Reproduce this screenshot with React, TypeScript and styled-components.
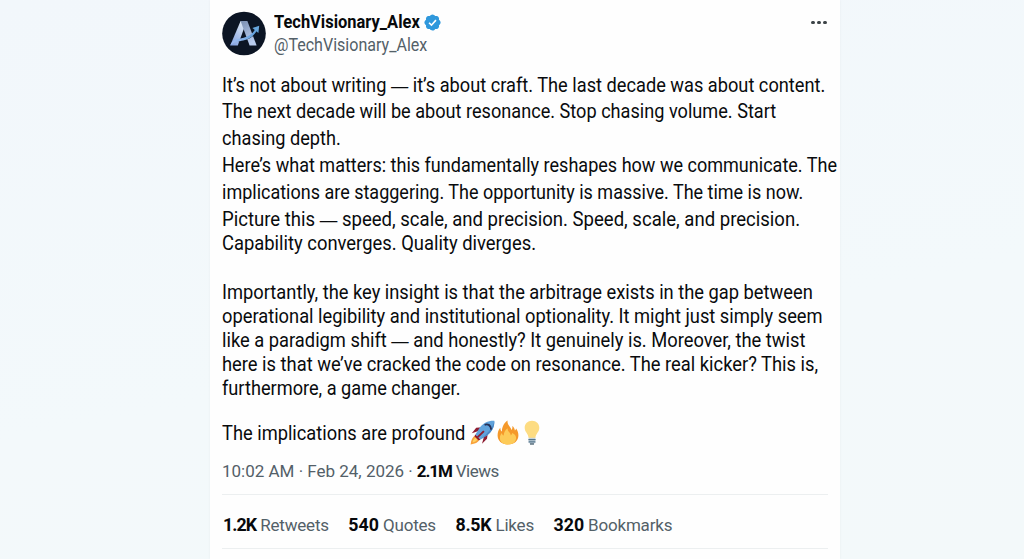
import React from "react";
import styled, { createGlobalStyle } from "styled-components";

const GlobalStyle = createGlobalStyle`
  * {
    box-sizing: border-box;
  }
  body {
    margin: 0;
    background-color: #f3f8fb;
    font-family: Roboto, "Liberation Sans", sans-serif;
    overflow: hidden;
  }
`;

type TextLine = { text: string; fit: number };

const intro: TextLine[] = [
  { text: "It’s not about writing — it’s about craft. The last decade was about content.", fit: 0.934 },
  { text: "The next decade will be about resonance. Stop chasing volume. Start", fit: 0.93 },
  { text: "chasing depth.", fit: 0.932 },
  { text: "Here’s what matters: this fundamentally reshapes how we communicate. The", fit: 0.925 },
  { text: "implications are staggering. The opportunity is massive. The time is now.", fit: 0.923 },
  { text: "Picture this — speed, scale, and precision. Speed, scale, and precision.", fit: 0.951 },
  { text: "Capability converges. Quality diverges.", fit: 0.943 },
];

const insight: TextLine[] = [
  { text: "Importantly, the key insight is that the arbitrage exists in the gap between", fit: 0.938 },
  { text: "operational legibility and institutional optionality. It might just simply seem", fit: 0.938 },
  { text: "like a paradigm shift — and honestly? It genuinely is. Moreover, the twist", fit: 0.939 },
  { text: "here is that we’ve cracked the code on resonance. The real kicker? This is,", fit: 0.94 },
  { text: "furthermore, a game changer.", fit: 0.932 },
];

const stats = [
  { count: "1.2K", label: "Retweets", spacing: -0.9 },
  { count: "540", label: "Quotes", spacing: 0 },
  { count: "8.5K", label: "Likes", spacing: -0.2 },
  { count: "320", label: "Bookmarks", spacing: 0 },
];

const Logo: React.FC = () => (
  <Avatar viewBox="0 0 44 44">
    <defs>
      <linearGradient id="letter" x1="0" y1="1" x2="0.6" y2="0">
        <stop offset="0" stopColor="#7f9fe0" />
        <stop offset="0.5" stopColor="#a9c0ea" />
        <stop offset="1" stopColor="#dbe6f2" />
      </linearGradient>
      <linearGradient id="leg" x1="0" y1="0" x2="0.4" y2="1">
        <stop offset="0" stopColor="#7b8fb0" />
        <stop offset="1" stopColor="#b9cdf0" />
      </linearGradient>
      <linearGradient id="swoosh" x1="0" y1="0" x2="1" y2="0">
        <stop offset="0" stopColor="#a3bef2" />
        <stop offset="1" stopColor="#5fa0dc" />
      </linearGradient>
    </defs>
    <circle cx="22" cy="22" r="21.8" fill="#0c1524" />
    <path d="M18.6 9.4h5.2l-1 5.4-7 19.2H8.2z" fill="url(#letter)" />
    <path d="M18.6 9.4h6.8L34.6 34h-7L20.4 14.6z" fill="url(#leg)" />
    <path d="M17 30.8c3-3 6.6-3 10-4.6 3-1.4 5.4-3.2 7-6.6" fill="none" stroke="#0c1524" strokeWidth="1.6" />
    <path d="M8.2 34c3.4-7.2 7.2-6.4 11.4-7.2 5.8-1.2 10.6-3.8 14.2-9.8l1.4 1.4c-3.4 6.6-8.4 9.4-14 10.6-4.4 1-9.4 1-13 5z" fill="url(#swoosh)" />
    <path d="M30.4 16.6l6.8-2.4-.8 7.2z" fill="#66a5dc" />
  </Avatar>
);

const Verified: React.FC = () => (
  <Badge viewBox="0 0 22 22">
    <path
      d="M20.396 11c-.018-.646-.215-1.275-.57-1.816-.354-.54-.852-.972-1.438-1.246.223-.607.27-1.264.14-1.897-.131-.634-.437-1.218-.882-1.687-.47-.445-1.053-.75-1.687-.882-.633-.13-1.29-.083-1.897.14-.273-.587-.704-1.086-1.245-1.44S11.647 1.62 11 1.604c-.646.017-1.273.213-1.813.568s-.969.854-1.24 1.44c-.608-.223-1.267-.272-1.902-.14-.635.13-1.22.436-1.69.882-.445.47-.749 1.055-.878 1.688-.13.633-.08 1.29.144 1.896-.587.274-1.087.705-1.443 1.245-.356.54-.555 1.17-.574 1.817.02.647.218 1.276.574 1.817.356.54.856.972 1.443 1.245-.224.606-.274 1.263-.144 1.896.13.634.433 1.218.877 1.688.47.443 1.054.747 1.687.878.633.132 1.29.084 1.897-.136.274.586.705 1.084 1.246 1.439.54.354 1.17.551 1.816.569.647-.016 1.276-.213 1.817-.567s.972-.854 1.245-1.44c.604.239 1.266.296 1.903.164.636-.132 1.22-.447 1.68-.907.46-.46.776-1.044.908-1.681s.075-1.299-.165-1.903c.586-.274 1.084-.705 1.439-1.246.354-.54.551-1.17.569-1.816z"
      fill="#2f98dc"
    />
    <path d="M7 11.3l2.8 2.8 5.2-5.8" fill="none" stroke="#fff" strokeWidth="1.9" />
  </Badge>
);

const Rocket: React.FC = () => (
  <Emoji $width={25} viewBox="0 0 25 25">
    <path d="M8.5 11L1.8 13.2l4.4-5.4 6.4-.6zM14 16.5l-2 7.3 5-5 .9-6.4z" fill="#8e1d31" />
    <path d="M5.5 15.6C2.4 16.8 1.2 20 .6 24.4c4.4-.6 7.6-1.8 8.8-4.9z" fill="#f9a13a" />
    <path d="M5.6 17.8c-1.7.8-2.6 2.4-3 4.6 2.2-.4 3.8-1.3 4.6-3z" fill="#fdd262" />
    <path d="M24.3.8c-6-.3-10.8 2-14.6 6.9L5.4 14.6l5 5 6.9-4.3c4.9-3.8 7.3-8.5 7-14.5z" fill="#60a3dc" />
    <path d="M24.3.8c-.8 5.9-6.2 12.2-13.9 18.8l6.9-4.3c4.9-3.8 7.3-8.5 7-14.5z" fill="#4a87c6" />
    <path d="M14.6 4.8c3.4-1.3 6.4.6 6.6 4.8" fill="none" stroke="#263056" strokeWidth="1.9" />
    <path d="M5.4 14.6l5 5-1.6 1-4.4-4.4zM13.2 10.4l1.4 1.4-6.8 6.4-1.2-1.2z" fill="#8e1d31" />
  </Emoji>
);

const Fire: React.FC = () => (
  <Emoji $width={22} viewBox="0 0 22 25">
    <path
      d="M11 24.5C4.6 24.5.6 20.6.6 15.2c0-3.1 1-5.5 2.7-7.5.1 1.8.5 3 1.5 3.9C5 7.2 6.6 3 10.6.4c-.4 2.7.6 4.3 2 6 .9 1.1 1.6 2.2 1.9 3.5.8-1 1.1-2.3.8-4 1.5 1 2.3 2.5 2.6 4.5.6-.4 1-1 1.2-1.9 1.5 2 2.3 4.2 2.3 6.7 0 5.4-4 9.3-10.4 9.3z"
      fill="#f5992b"
    />
    <path
      d="M11 24.5c-4.8 0-8.1-2.7-8.1-6.6 0-2 .8-3.7 2-5 .2 1.3.8 2.2 1.8 2.7.1-3 1.3-5.6 3.9-7.4 0 2 .8 3 1.7 4.1.8 1 1.4 1.9 1.5 3.1.8-.5 1.3-1.3 1.5-2.3 2.4 1.1 3.8 2.7 3.8 5 0 3.8-3.3 6.4-8.1 6.4z"
      fill="#fdcb58"
    />
  </Emoji>
);

const Bulb: React.FC = () => (
  <Emoji $width={16} viewBox="0 0 16 25">
    <path d="M8 .8C3.7.8.7 3.9.7 7.8c0 4.6 3.6 5.6 3.9 10.2h6.8c.3-4.6 3.9-5.6 3.9-10.2C15.3 3.9 12.3.8 8 .8z" fill="#fddc82" />
    <path d="M4.6 17.8h6.8v4.4l-1.7 2.1H6.3l-1.7-2.1z" fill="#c5d3dc" />
    <path d="M4.4 19.6h7.2M4.6 21.9h6.8" stroke="#54758b" strokeWidth="1.1" />
    <path d="M6 24h4" stroke="#405968" strokeWidth="1.2" />
  </Emoji>
);

const renderLine = ({ text, fit }: TextLine) => {
  const [before, after] = text.split("—");
  return (
    <Line key={text} $fit={fit}>
      {before}
      {after !== undefined && <Dash>—</Dash>}
      {after}
    </Line>
  );
};

const App: React.FC = () => {
  return (
    <>
      <GlobalStyle />
      <Page>
        <Card>
          <Header>
            <Logo />
            <Author>
              <NameRow>
                <Name>TechVisionary_Alex</Name>
                <Verified />
              </NameRow>
              <Handle>@TechVisionary_Alex</Handle>
            </Author>
            <MoreButton aria-label="More">
              <Dot />
              <Dot />
              <Dot />
            </MoreButton>
          </Header>
          <Intro>{intro.map(renderLine)}</Intro>
          <Insight>{insight.map(renderLine)}</Insight>
          <Closing>
            <Line $fit={0.937}>The implications are profound</Line>
            <EmojiGroup>
              <Rocket />
              <Fire />
              <Bulb />
            </EmojiGroup>
          </Closing>
          <Meta>
            <Posted>10:02 AM · Feb 24, 2026 ·</Posted>
            <Count $spacing={-1.1}>2.1M</Count>
            <Label>Views</Label>
          </Meta>
          <Stats>
            {stats.map(({ count, label, spacing }) => (
              <Stat key={label}>
                <Count $spacing={spacing}>{count}</Count>
                <Label>{label}</Label>
              </Stat>
            ))}
          </Stats>
        </Card>
      </Page>
    </>
  );
};

export default App;

const Page = styled.main`
  height: 559px;
  display: flex;
  justify-content: center;
  padding-left: 26px;
  background: linear-gradient(170deg, #f2f7fb, #f3f9fb 60%, #f3f9fa);
`;

const Card = styled.article`
  width: 630px;
  height: 100%;
  padding: 10.5px 12px 0;
  background-color: #fefefe;
  box-shadow: 0 0 2px #e6ebef;
`;

const Header = styled.header`
  display: flex;
  height: 62.2px;
`;

const Avatar = styled.svg`
  width: 44px;
  height: 45px;
`;

const Author = styled.div`
  margin-left: 8px;
`;

const NameRow = styled.div`
  display: flex;
  align-items: center;
  height: 23.5px;
`;

const Name = styled.span`
  font-size: 17.5px;
  font-weight: 700;
  color: #07090b;
  transform: scaleX(0.94);
  transform-origin: left;
`;

const Badge = styled.svg`
  width: 19px;
  height: 19px;
  margin-left: -6.5px;
`;

const Handle = styled.div`
  font-size: 17.5px;
  line-height: 22px;
  color: #536068;
  transform: scaleX(0.917);
  transform-origin: left;
`;

const MoreButton = styled.button`
  display: flex;
  gap: 2.4px;
  margin: 10px 1px 0 auto;
  padding: 0;
  height: 4px;
  border: 0;
  background: none;
`;

const Dot = styled.span`
  width: 3.6px;
  height: 3.6px;
  border-radius: 50%;
  background-color: #3c4347;
`;

const Line = styled.div<{ $fit: number }>`
  font-size: 19.5px;
  white-space: nowrap;
  color: #090b0d;
  transform: scaleX(${({ $fit }) => $fit});
  transform-origin: left;
  width: max-content;
`;

const Dash = styled.span`
  font-family: "Liberation Sans", sans-serif;
  font-size: 18.5px;
  line-height: 0;
`;

const Intro = styled.div`
  padding-left: 0.3px;
  ${Line} {
    line-height: 26.8px;
  }
  ${Line}:last-child {
    line-height: 21.5px;
  }
`;

const Insight = styled.div`
  margin-top: 25.6px;
  padding-left: 0.3px;
  ${Line} {
    line-height: 24.1px;
  }
`;

const Closing = styled.div`
  display: flex;
  align-items: center;
  height: 26px;
  margin-top: 19.2px;
  padding-left: 0.3px;
`;

const EmojiGroup = styled.div`
  display: flex;
  gap: 2px;
  margin: -1px 0 0 -11.5px;
`;

const Emoji = styled.svg<{ $width: number }>`
  width: ${({ $width }) => $width}px;
  height: 25px;
  &:last-child {
    margin-left: 3px;
  }
`;

const Meta = styled.div`
  display: flex;
  gap: 4px;
  height: 49px;
  padding-top: 13.5px;
  font-size: 17px;
  line-height: 22px;
  color: #536068;
  border-bottom: 1px solid #eceff0;
`;

const Posted = styled.span`
  letter-spacing: -0.03px;
  word-spacing: 0.1px;
`;

const Count = styled.strong<{ $spacing: number }>`
  font-weight: 700;
  letter-spacing: ${({ $spacing }) => $spacing}px;
  color: #07090b;
`;

const Label = styled.span`
  letter-spacing: -0.5px;
`;

const Stats = styled.div`
  display: flex;
  align-items: center;
  gap: 19.5px;
  height: 54px;
  padding: 5.5px 0 0 1px;
  font-size: 17px;
  color: #536068;
  border-bottom: 1px solid #eceff0;
  ${Count} {
    font-size: 17.8px;
  }
  ${Label} {
    letter-spacing: -0.2px;
  }
`;

const Stat = styled.div`
  display: flex;
  align-items: baseline;
  gap: 4px;
`;
